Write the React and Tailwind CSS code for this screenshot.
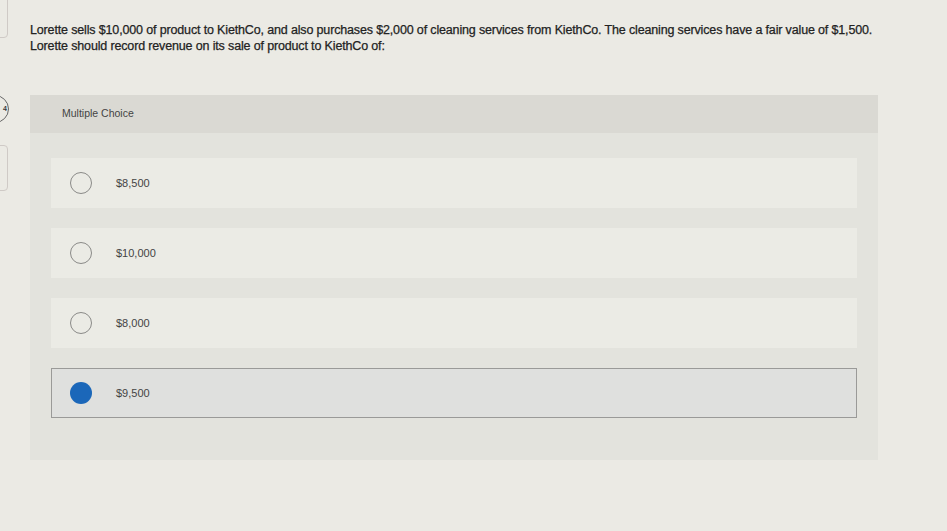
import React from "react";

const options = [
  { label: "$8,500", selected: false },
  { label: "$10,000", selected: false },
  { label: "$8,000", selected: false },
  { label: "$9,500", selected: true },
];

function App() {
  return (
    <div
      className="relative h-[531px] w-[947px] overflow-hidden bg-[#ebeae4] text-[#3a3a3a]"
      style={{ fontFamily: '"Liberation Sans", Arial, sans-serif' }}
    >
      {/* bits of the sidebar cut off at the left edge */}
      <div className="absolute left-[-20px] top-[-4px] h-[42px] w-[28px] rounded border border-[#cfcac6]" />
      <div className="absolute left-[-19px] top-[95px] flex h-[28px] w-[28px] items-center justify-end rounded-full border-[1.5px] border-[#666] pr-[1px] text-[7px] font-bold">
        4
      </div>
      <div className="absolute left-[-20px] top-[145px] h-[46px] w-[28px] rounded border border-[#cfcac6]" />

      <div className="pl-[30px] pt-[22px]">
        <p className="w-[900px] text-[12.5px] leading-[16px] tracking-[-0.15px] text-[#222] [-webkit-text-stroke:0.25px_#222]">
          Lorette sells $10,000 of product to KiethCo, and also purchases $2,000 of cleaning services from KiethCo. The cleaning services have a fair value of $1,500.
          <br />
          Lorette should record revenue on its sale of product to KiethCo of:
        </p>

        <div className="mt-[41px] w-[848px] bg-[#e3e3dd]">
          <div className="flex h-[38px] items-center bg-[#dad9d3] pl-[32px] text-[10.5px] text-[#444]">
            Multiple Choice
          </div>
          <div className="flex flex-col gap-[20px] px-[21px] pb-[42px] pt-[25px]">
            {options.map((o) => (
              <div
                key={o.label}
                className={
                  o.selected
                    ? "flex h-[50px] items-center border border-[#9a9a98] bg-[#dfe0de] pl-[18px]"
                    : "flex h-[50px] items-center border border-transparent bg-[#ebebe5] pl-[18px]"
                }
              >
                {o.selected ? (
                  <span className="h-[22px] w-[22px] rounded-full bg-[#1b67b9]" />
                ) : (
                  <span className="h-[22px] w-[22px] rounded-full border-[1.5px] border-[#8a8a88]" />
                )}
                <span className="ml-[24px] text-[11px] text-[#444]">{o.label}</span>
              </div>
            ))}
          </div>
        </div>
      </div>
    </div>
  );
}

export default App;
